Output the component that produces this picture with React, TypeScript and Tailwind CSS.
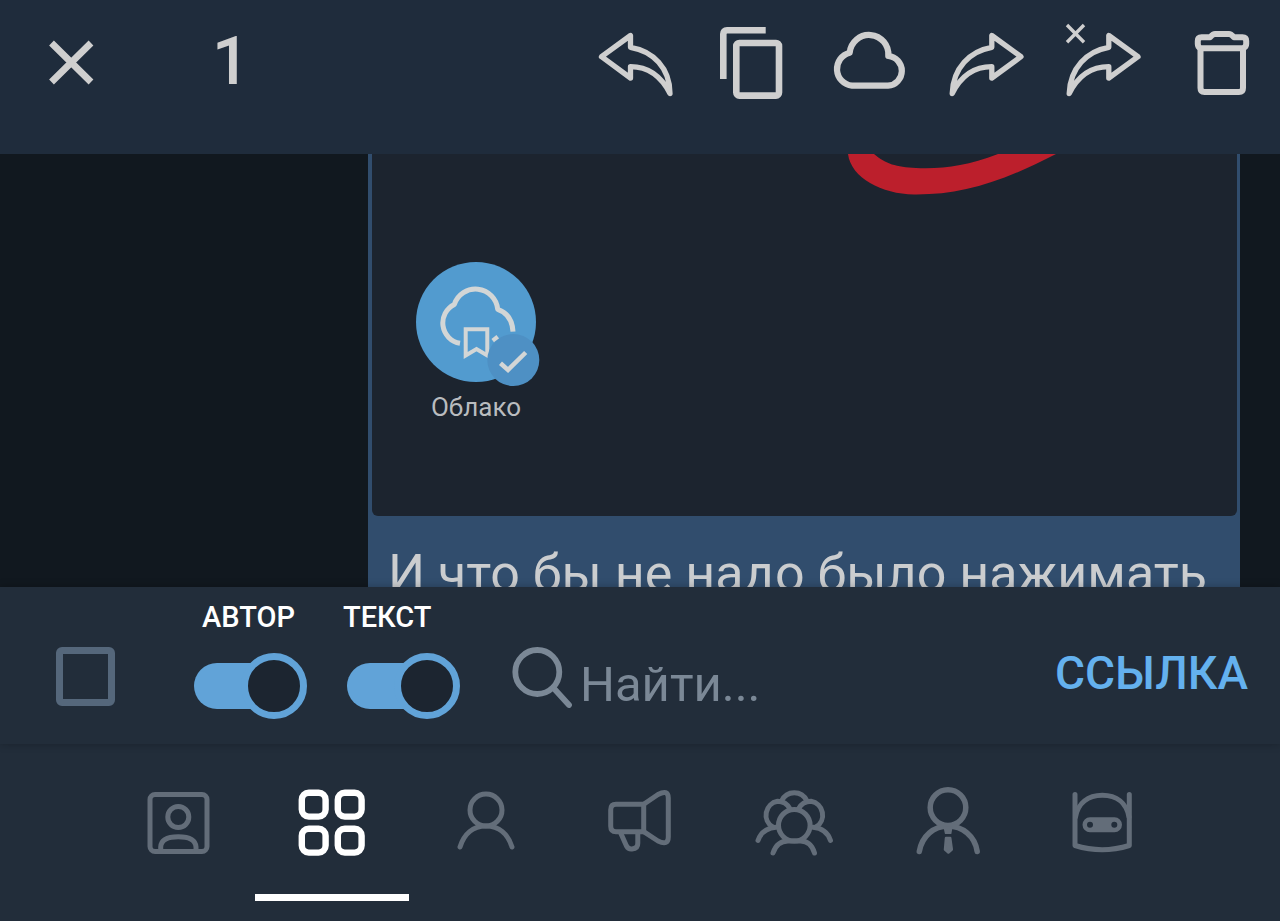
import { useState } from 'react'
import type { ReactNode } from 'react'
import clsx from 'clsx'

const FORWARD_ARROW = 'M92 34.7 62.8 13.5V25.3C41 29 24 46 23.2 71.5 32 54 46 44.7 62.8 44.7V56Z'

const ACTIONS: { label: string; strokeWidth: number; icon: ReactNode }[] = [
  {
    label: 'Ответить',
    strokeWidth: 5.3,
    icon: <path d="M23.5 34.7 52.5 13.5V25.3C75 29 92 46 92 71.5 83 54 69 44.7 52.5 44.7V56Z" />
  },
  {
    label: 'Копировать',
    strokeWidth: 6.6,
    icon: (
      <>
        <path d="M28.3 57V12Q28.3 8.3 32 8.3H70.7" />
        <rect x="41.3" y="21" width="42.7" height="52.6" rx="3" />
      </>
    )
  },
  {
    label: 'В облако',
    strokeWidth: 6.2,
    icon: <path d="M40 63.7H76A14.9 14.9 0 0 0 76.3 34 19.3 19.3 0 0 0 37.7 30.7 16.8 16.8 0 0 0 40 63.7Z" />
  },
  { label: 'Переслать', strokeWidth: 5.3, icon: <path d={FORWARD_ARROW} /> },
  {
    label: 'Переслать без автора',
    strokeWidth: 5.3,
    icon: (
      <>
        <path d={FORWARD_ARROW} />
        <path d="M21 3 38 20.3M38 3 21 20.3" strokeWidth="3.4" />
      </>
    )
  },
  {
    label: 'Удалить',
    strokeWidth: 6,
    icon: (
      <>
        <path d="M37.5 26V66Q37.5 70 41.5 70H76Q80 70 80 66V26" />
        <path d="M37.5 26.3Q34.8 25 34.8 22V19Q34.8 15.3 38.5 15.3H47Q50 12 52 12H66Q68 12 71 15.3H79.5Q83.2 15.3 83.2 19V22Q83.2 25 80 26.3Z" />
      </>
    )
  }
]

const TABS: { id: string; label: string; icon: ReactNode }[] = [
  {
    id: 'contacts',
    label: 'Контакты',
    icon: (
      <>
        <rect x="12" y="12.5" width="57" height="57" rx="5" />
        <circle cx="40.3" cy="35" r="10.5" />
        <path d="M22.7 69V65C23 57 31 54.7 40.3 54.7S57.5 57 58 65V69" />
      </>
    )
  },
  {
    id: 'all',
    label: 'Все чаты',
    icon: (
      <g strokeWidth="6.4">
        <rect x="9.8" y="10.8" width="23.8" height="23.8" rx="7" />
        <rect x="45.8" y="10.8" width="23.8" height="23.8" rx="7" />
        <rect x="9.8" y="46.8" width="23.8" height="23.8" rx="7" />
        <rect x="45.8" y="46.8" width="23.8" height="23.8" rx="7" />
      </g>
    )
  },
  {
    id: 'users',
    label: 'Пользователи',
    icon: (
      <>
        <circle cx="40" cy="28" r="16" />
        <path d="M14 65C18 52 27 44 40 44S62 52 66 65" />
      </>
    )
  },
  {
    id: 'channels',
    label: 'Каналы',
    icon: (
      <>
        <path d="M43.7 22.3H16Q10.7 22.3 10.7 28V44Q10.7 49.7 16 49.7H43.7Z" />
        <path d="M43.7 22.3 58 12.5Q68.3 7 68.3 16V55Q68.3 64 58 59L43.7 49.7" />
        <path d="M20.7 51 26.5 64Q28.5 67.5 32 67Q38 66.5 37.8 61V51" />
      </>
    )
  },
  {
    id: 'groups',
    label: 'Группы',
    icon: (
      <>
        <circle cx="40.3" cy="43.3" r="15.8" />
        <path d="M18.7 45A14 14 0 0 1 23.5 19.3Q32 19.3 36 27" />
        <path d="M62 45A14 14 0 0 0 57 19.3Q48.5 19.3 44.5 27" />
        <path d="M27.5 19Q31.5 10.7 40.3 10.7T53 19" />
        <path d="M4 58.5Q8 46.5 22 45.3M76.5 58.5Q72.5 46.5 59 45.3" />
        <path d="M19 71Q23 59 34 59H46.5Q57 59 60.5 71" />
      </>
    )
  },
  {
    id: 'admins',
    label: 'Администратор',
    icon: (
      <>
        <circle cx="40" cy="25.6" r="17.8" strokeWidth="5.5" />
        <path d="M11.3 69.5C14 54 26 44 40 44S67 54 69.2 69.5" strokeWidth="5.5" />
        <path d="M35.3 44.7H44.7L43.3 52H37Z" fill="currentColor" stroke="none" />
        <path d="M38 56H42.2L43.8 67.5 40.4 70.5 37 67.5Z" fill="currentColor" strokeWidth="2.5" />
      </>
    )
  },
  {
    id: 'bots',
    label: 'Боты',
    icon: (
      <>
        <path d="M13 12.5V63.5Q40 72 67.3 63.5V12.5" />
        <path d="M13.5 35C16 21 26 13.3 40.3 13.3S64.5 21 67 35" />
        <path
          d="M28 35.3H52.5A7.5 7.5 0 0 1 52.5 50.3H28A7.5 7.5 0 0 1 28 35.3ZM28 39.8A3 3 0 1 0 28 45.8 3 3 0 1 0 28 39.8ZM52.3 39.8A3 3 0 1 0 52.3 45.8 3 3 0 1 0 52.3 39.8Z"
          fill="currentColor"
          fillRule="evenodd"
          stroke="none"
        />
      </>
    )
  }
]

function SelectionBar() {
  return (
    <header className="relative z-10 flex h-[154px] shrink-0 items-start bg-[#1f2c3c] pt-[22px] text-[#cfcfcf]">
      <button type="button" aria-label="Закрыть">
        <svg className="h-20 w-[142px]" viewBox="0 0 142 80" fill="none" stroke="currentColor" strokeWidth="6.8">
          <path d="M51.5 21 91 60M91 21 51.5 60" />
        </svg>
      </button>
      <span className="ml-[70px] text-[66px] leading-20 font-medium">1</span>
      <div className="ml-auto flex">
        {ACTIONS.map((action) => (
          <button key={action.label} type="button" aria-label={action.label}>
            <svg
              className="h-20 w-[117px]"
              viewBox="0 0 117 80"
              fill="none"
              stroke="currentColor"
              strokeWidth={action.strokeWidth}
              strokeLinejoin="round"
            >
              {action.icon}
            </svg>
          </button>
        ))}
      </div>
    </header>
  )
}

function CloudChat() {
  return (
    <figure className="mt-[66px] ml-[43px] flex w-[122px] flex-col">
      <svg className="h-[126px] w-[126px]" viewBox="0 0 126 126" fill="none" stroke="#d3d6d6" strokeWidth="5">
        <circle cx="61" cy="61" r="60" fill="#529bcf" stroke="none" />
        <path d="M45 82.3A20.6 20.6 0 0 1 39.3 43.5 22.3 22.3 0 0 1 82.7 48.3Q97 53 98 70.7" strokeLinejoin="round" />
        <path d="M78 80 83 76" />
        <path d="M50.7 68.3H72.3V94.5L61.5 88 50.7 94.5Z" strokeWidth="4" />
        <circle cx="98.3" cy="99" r="26" fill="#4e90c4" stroke="none" />
        <path d="M85.5 102.3 93 109 110.7 91.5" strokeWidth="4.5" />
      </svg>
      <figcaption className="mt-1 text-center text-[26px] leading-8 text-[#b9bcbf]">Облако</figcaption>
    </figure>
  )
}

function Message() {
  return (
    <article className="mr-10 ml-auto w-full max-w-[872px] bg-[#314d6d]">
      <div className="mr-[3px] ml-1 h-[362px] rounded-b-md bg-[#1c242f]">
        <svg className="ml-[476px] h-[41px] w-52" viewBox="0 0 208 41" fill="#bc1f2c">
          <path d="M0 0C3 24 34 40 66 40.5 112 41 152 29 208 0H150C118 12 96 15 68 14 48 13 38 10 26 0Z" />
        </svg>
        <CloudChat />
      </div>
      <p className="pt-[26px] pl-5 text-[52px] leading-16 whitespace-nowrap text-[#cbcdcf]">
        И что бы не надо было нажимать
      </p>
    </article>
  )
}

function Switch({ id, label, labelClass, inputClass }: { id: string; label: string; labelClass?: string; inputClass?: string }) {
  const [on, setOn] = useState(true)

  return (
    <div className="flex flex-col items-start pt-3">
      <label htmlFor={id} className={clsx('text-[29px] leading-9 font-medium text-white', labelClass)}>
        {label}
      </label>
      <input
        id={id}
        type="checkbox"
        role="switch"
        checked={on}
        onChange={() => setOn(!on)}
        className={clsx(
          'relative mt-[18px] h-[66px] w-[113px] cursor-pointer appearance-none',
          'before:absolute before:top-[10px] before:right-4 before:left-0 before:h-[46px] before:rounded-full before:bg-[#61a3d8]',
          'after:absolute after:top-0 after:size-[66px] after:rounded-full after:border-[7px] after:border-[#61a3d8] after:bg-[#1c2530]',
          on ? 'after:right-0' : 'after:left-0',
          inputClass
        )}
      />
    </div>
  )
}

function SharePanel() {
  const [query, setQuery] = useState('')

  return (
    <section className="relative z-10 flex h-[157px] shrink-0 items-start bg-[#222d3a] shadow-[0_0_8px_rgba(0,0,0,0.25)]">
      <input
        type="checkbox"
        aria-label="Выбрать все"
        className="mt-[60px] ml-14 size-[59px] shrink-0 appearance-none rounded-md border-[7px] border-[#55677b] checked:bg-[#61a3d8]"
      />
      <div className="ml-[79px] flex shrink-0 gap-9">
        <Switch id="author" label="АВТОР" labelClass="pl-2" />
        <Switch id="text" label="ТЕКСТ" inputClass="ml-1" />
      </div>
      <label htmlFor="search" className="mt-[60px] ml-[52px] shrink-0">
        <svg
          className="size-[62px]"
          viewBox="0 0 62 62"
          fill="none"
          stroke="#7b8896"
          strokeWidth="5.8"
          strokeLinecap="round"
          aria-hidden="true"
        >
          <circle cx="25.3" cy="25" r="22" />
          <path d="M41.5 41 57 58" />
        </svg>
      </label>
      <input
        id="search"
        type="text"
        aria-label="Найти"
        value={query}
        onChange={(e) => setQuery(e.target.value)}
        placeholder="Найти..."
        className="mt-[66px] ml-[6px] h-16 min-w-0 flex-1 bg-transparent text-[49px] text-white outline-none placeholder:text-[#7b8896]"
      />
      <button type="button" className="mt-[54px] mr-8 shrink-0 text-[46px] leading-16 font-medium text-[#64b1ee]">
        ССЫЛКА
      </button>
    </section>
  )
}

function ChatTabs() {
  const [active, setActive] = useState('all')

  return (
    <nav className="flex h-[177px] shrink-0 items-start justify-center bg-[#222d3a]">
      {TABS.map((tab) => (
        <button
          key={tab.id}
          type="button"
          aria-label={tab.label}
          onClick={() => setActive(tab.id)}
          className={clsx(
            'flex h-[157px] w-full max-w-[154px] justify-center border-b-[7px] pt-[38px]',
            active === tab.id ? 'border-white text-white' : 'border-transparent text-[#636d79]'
          )}
        >
          <svg
            className="size-20"
            viewBox="0 0 80 80"
            fill="none"
            stroke="currentColor"
            strokeWidth="5"
            strokeLinecap="round"
            strokeLinejoin="round"
          >
            {tab.icon}
          </svg>
        </button>
      ))}
    </nav>
  )
}

export default function App() {
  return (
    <div className="flex h-screen flex-col overflow-hidden bg-[#11181f] font-[Roboto,sans-serif]">
      <SelectionBar />
      <main className="flex min-h-0 flex-1 items-start overflow-hidden">
        <Message />
      </main>
      <SharePanel />
      <ChatTabs />
    </div>
  )
}
